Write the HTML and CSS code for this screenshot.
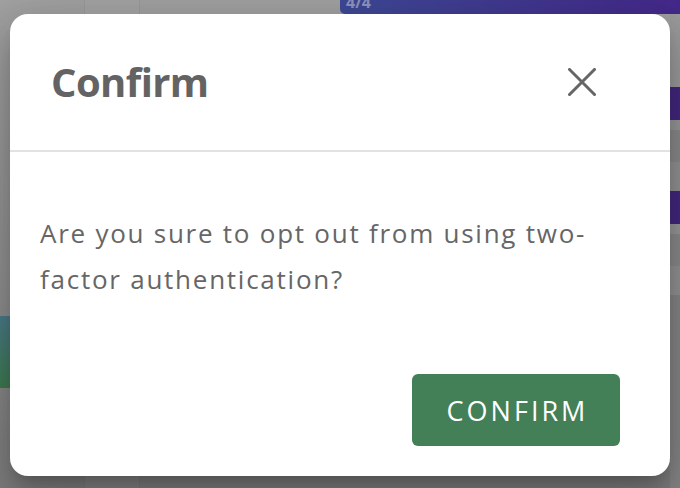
FILE: index.html
```html
<!DOCTYPE html>
<html lang="en">
<head>
<meta charset="utf-8">
<title>Confirm</title>
<link rel="stylesheet" href="styles.css">
</head>
<body>
<div class="backdrop">
  <div class="band"></div>
  <div class="topbar"><span class="topbar-text">4/4</span></div>
  <div class="left-col"><div class="chip"></div></div>
  <div class="strip">
    <div class="s s1"></div>
    <div class="s purple"></div>
    <div class="s s2"></div>
    <div class="s s3"></div>
    <div class="s s4"></div>
    <div class="s purple"></div>
    <div class="s s2"></div>
    <div class="s s3"></div>
    <div class="s s4"></div>
    <div class="s s5"></div>
  </div>
</div>
<div class="dialog" role="dialog" aria-labelledby="dlg-title">
  <header class="dialog-header">
    <h2 id="dlg-title" class="dialog-title">Confirm</h2>
    <button class="close-btn" aria-label="Close">
      <svg width="28" height="28" viewBox="0 0 28 28"><path d="M1.5 1.5 L26.5 26.5 M26.5 1.5 L1.5 26.5" stroke="#666" stroke-width="3" stroke-linecap="square" fill="none"/></svg>
    </button>
  </header>
  <div class="dialog-body">
    <p class="dialog-text">Are you sure to opt out from using two-factor authentication?</p>
  </div>
  <footer class="dialog-footer">
    <button class="confirm-btn">CONFIRM</button>
  </footer>
</div>
</body>
</html>
```
FILE: styles.css
```css
html, body {
  margin: 0;
  padding: 0;
  width: 680px;
  height: 488px;
  overflow: hidden;
}
body {
  position: relative;
  font-family: "Open Sans", "Liberation Sans", sans-serif;
  background: linear-gradient(#a1a1a1, #8f8f8f 60%, #7d7d7d);
}
.backdrop {
  display: grid;
  grid-template-columns: 84px 56px 200px 330px 10px;
  grid-template-rows: 14px 474px;
  width: 680px;
  height: 488px;
}
.band {
  grid-column: 2;
  grid-row: 1 / 3;
  border-left: 1px solid rgba(0,0,0,0.06);
  border-right: 1px solid rgba(0,0,0,0.06);
  background: rgba(255,255,255,0.03);
}
.topbar {
  grid-column: 4 / 6;
  grid-row: 1;
  background: linear-gradient(90deg, #3e4996, #44288a);
  border-bottom-left-radius: 5px;
  overflow: hidden;
}
.topbar-text {
  display: block;
  margin: -7px 0 0 6px;
  font-size: 16px;
  font-weight: 700;
  color: #8e93bd;
  line-height: 18px;
}
.left-col {
  grid-column: 1;
  grid-row: 2;
}
.chip {
  margin-top: 302px;
  width: 20px;
  height: 72px;
  border-radius: 0 8px 8px 0;
  background: linear-gradient(#4a7b89, #3e7a4f);
}
.strip {
  grid-column: 5;
  grid-row: 2;
  display: flex;
  flex-direction: column;
}
.s { height: 34px; }
.s1 { height: 76px; background: #9b9b9b; }
.purple { height: 34px; background: #43287f; }
.s2 { height: 10px; background: #979797; }
.s3 { height: 34px; background: #8a8a8a; }
.s4 { height: 30px; background: #929292; }
.s5 { height: 200px; background: #858585; }

.dialog {
  position: absolute;
  left: 10px;
  top: 14px;
  width: 660px;
  height: 462px;
  background: #fff;
  border-radius: 18px;
  box-shadow: 0 11px 15px -7px rgba(0,0,0,.2), 0 24px 38px 3px rgba(0,0,0,.14), 0 9px 46px 8px rgba(0,0,0,.12);
  display: flex;
  flex-direction: column;
}
.dialog-header {
  height: 136px;
  border-bottom: 2px solid #e2e2e2;
  display: flex;
  align-items: center;
  justify-content: space-between;
  padding: 0 74px 0 41px;
}
.dialog-title {
  margin: 0;
  font-size: 40px;
  font-weight: 700;
  color: #636363;
  line-height: 1;
  letter-spacing: -0.6px;
}
.close-btn {
  border: 0;
  background: none;
  padding: 0;
  width: 28px;
  height: 28px;
  display: flex;
}
.dialog-body {
  padding: 58px 50px 0 30px;
  flex: 1;
}
.dialog-text {
  margin: 0;
  font-size: 26px;
  line-height: 46px;
  letter-spacing: 1.75px;
  color: #666;
}
.dialog-footer {
  display: flex;
  justify-content: flex-end;
  padding: 0 50px 30px;
}
.confirm-btn {
  width: 208px;
  height: 72px;
  border: 0;
  border-radius: 6px;
  background: #438057;
  color: #fff;
  font-family: "Open Sans", "Liberation Sans", sans-serif;
  font-size: 27px;
  font-weight: 500;
  letter-spacing: 3px;
  text-indent: 3px;
}
```
